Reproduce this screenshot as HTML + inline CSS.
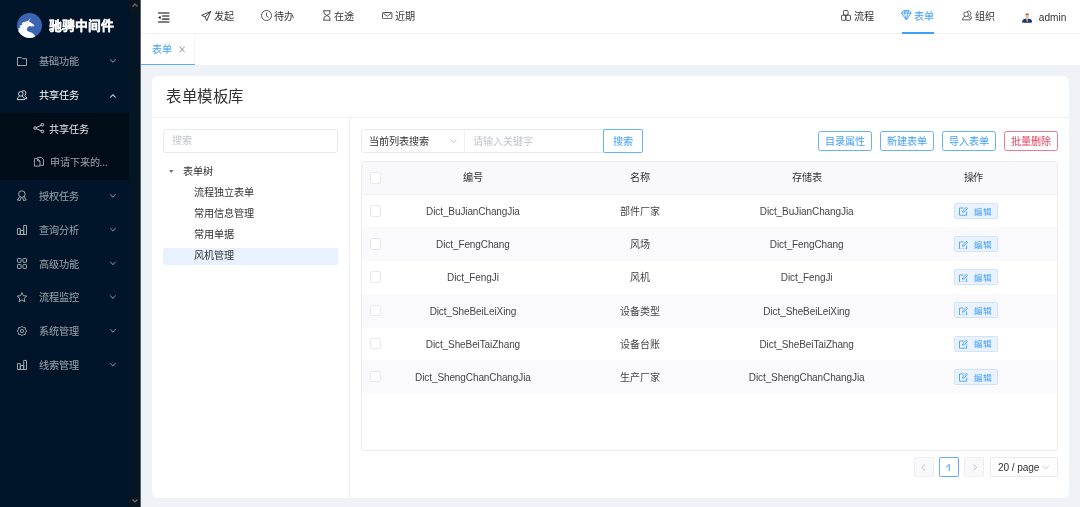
<!DOCTYPE html>
<html lang="zh-CN"><head><meta charset="utf-8"><style>
*{box-sizing:border-box;margin:0;padding:0}
html,body{width:1080px;height:507px;overflow:hidden;background:#eff3f7;font-family:"Liberation Sans",sans-serif;font-size:10.125px;color:#333}
#wrap{position:absolute;left:0;top:0;width:1080px;height:507px;will-change:transform;background:#eff3f7}
.abs{position:absolute}
#side{position:absolute;left:0;top:0;width:141px;height:507px;background:#001529}
.mi{position:absolute;left:0;width:129px;height:33.75px;color:rgba(255,255,255,.6);font-size:10.125px;line-height:33.75px;white-space:nowrap}
.mi .t{position:absolute;left:39px;top:0}
.mi svg.ic{position:absolute;left:17px;top:11.8px}
.mi .ch{position:absolute;left:110px;top:15px}
.sub{position:absolute;left:0;top:112.5px;width:129px;height:67.5px;background:#000c17}
.sub .mi .t{left:49px}
.sub .mi svg.ic{left:33.5px}
.nav{position:absolute;top:0;height:33px;line-height:33px;color:#333;font-size:10.125px;white-space:nowrap}
.btn{position:absolute;top:131px;height:20px;width:54px;border:1px solid #66b1ff;border-radius:2.5px;color:#409eff;text-align:center;line-height:19px;font-size:10.125px;background:#fff}
.row{position:absolute;left:361px;width:697px;height:33.13px;border-bottom:1px solid #f0f1f4}
.cell{position:absolute;top:1px;height:33px;line-height:33px;text-align:center;color:#454545;white-space:nowrap;font-size:10px;letter-spacing:-.1px}
.hd .cell{color:#333;font-size:10.125px;line-height:32px;top:0}
.cb{position:absolute;left:8.6px;top:10.5px;width:11.6px;height:11.6px;border:1px solid #e6e8eb;border-radius:2px;background:#fff}
.edit{position:absolute;left:593px;top:8.3px;width:44px;height:16px;background:#eaf3fd;border:1px solid #cfe4fb;border-radius:2px;color:#409eff;font-size:8.5px;line-height:14px}
.tree{position:absolute;color:#333;font-size:10.125px;white-space:nowrap;line-height:12px}
.pg{position:absolute;top:457px;height:20px;border:1px solid #eeeef0;border-radius:2px;background:#f9f9fb}
</style></head><body><div id="wrap">

<div id="side">
  <svg class="abs" style="left:17.2px;top:12.5px" width="25" height="25" viewBox="0 0 26 26">
    <defs><clipPath id="cc"><circle cx="13" cy="13" r="13"/></clipPath></defs>
    <circle cx="13" cy="13" r="13" fill="#3b64b3"/>
    <path clip-path="url(#cc)" d="M14.7 4.7L12.2 8.75C13.8 9.3 15.5 10.4 17.8 12.5L18.1 13.6 15.3 14.1 13.1 13.6C12 14 11.2 14.6 10.9 15.3 10.4 16.2 10 17 10.2 17.8 10.6 18.8 11.6 19.2 12.6 19.6 14.4 20.2 15.6 20.6 16.6 21.3 17.8 22.2 18.6 23.2 18.75 24.4L18.1 26 0 26 0 19 2.5 17.5 0.9 16.25 3.9 14.7 2.5 13.6 5.9 11.75 4.7 10.6C6.5 9.4 8 8.9 9.1 8.75L11.25 8.4Z" fill="#fff"/>
  </svg>
  <div class="abs" style="left:49.3px;top:17.5px;color:#fff;font-weight:bold;font-size:12.8px;line-height:15px;white-space:nowrap;-webkit-text-stroke:.3px #fff">驰骋中间件</div>
  <div class="sub"></div>
  <div class="mi" style="top:45.1px"><span class="t">基础功能</span></div>
  <div class="mi" style="top:78.85px;color:#fff"><span class="t">共享任务</span></div>
  <div class="mi" style="top:112.5px;color:#e6e7e9"><span class="t" style="left:49px">共享任务</span></div>
  <div class="mi" style="top:146.25px"><span class="t" style="left:49.5px">申请下来的...</span></div>
  <div class="mi" style="top:180px"><span class="t">授权任务</span></div>
  <div class="mi" style="top:213.75px"><span class="t">查询分析</span></div>
  <div class="mi" style="top:247.5px"><span class="t">高级功能</span></div>
  <div class="mi" style="top:281.25px"><span class="t">流程监控</span></div>
  <div class="mi" style="top:315px"><span class="t">系统管理</span></div>
  <div class="mi" style="top:348.75px"><span class="t">线索管理</span></div>
  <svg class="abs" style="left:0;top:0" width="141" height="507" viewBox="0 0 141 507" fill="none" stroke="#a6adb4" stroke-width=".95" stroke-linejoin="round">
    <path d="M17.45 57.45H21.2L22.4 58.7H26.5V65.5H17.45Z"/>
    <g stroke="#e2e4e7">
      <circle cx="20.8" cy="93.9" r="2.3"/>
      <path d="M17.2 99.6C17.4 97.6 18.5 96.6 19.6 96.2M22 96.2C23.2 96.6 24.3 97.6 24.6 99.6H17.2"/>
      <path d="M21.9 91.3A2.4 2.4 0 0 1 25.9 92.9C25.9 94 25.3 94.9 24.5 95.4M24.6 95.7C25.8 96.2 26.7 97.2 26.8 98.7H25.1"/>
    </g>
    <g stroke="#d6d8db">
      <circle cx="35.1" cy="128.1" r="1.3"/><circle cx="42.4" cy="124.7" r="1.3"/><circle cx="42.4" cy="131.5" r="1.3"/>
      <path d="M36.3 127.5L41.2 125.3M36.3 128.7L41.2 130.9"/>
    </g>
    <path d="M34.4 158.6H37.6L40 161V166.1H34.4ZM37.6 158.6V161H40M37.8 158.3V157.4H41.5L43.5 159.4V165.3H40.2"/>
    <circle cx="21.85" cy="194.1" r="3.3"/>
    <path d="M19.7 196.6L17.4 200.1 19 200 19.8 201 21.2 197.6M24 196.6L26.3 200.1 24.7 200 23.9 201 22.5 197.6"/>
    <path d="M17.45 234.5V228.6H20.3V234.5M20.3 234.5V230.5H23.7V234.5M23.7 234.5V225.45H26.5V234.5ZM17.45 234.5H26.5"/>
    <rect x="17.45" y="258.45" width="3.6" height="3.9" rx=".7"/><rect x="22.95" y="258.45" width="3.55" height="3.9" rx=".7"/>
    <rect x="17.45" y="264.5" width="3.6" height="4" rx=".7"/><rect x="22.95" y="264.5" width="3.55" height="4" rx=".7"/>
    <path d="M21.95 292.60 L23.33 295.70 L26.71 296.05 L24.18 298.33 L24.89 301.65 L21.95 299.95 L19.01 301.65 L19.72 298.33 L17.19 296.05 L20.57 295.70Z"/>
    <path d="M21.95 326.30 L23.39 327.59 L25.31 327.69 L25.41 329.61 L26.70 331.05 L25.41 332.49 L25.31 334.41 L23.39 334.51 L21.95 335.80 L20.51 334.51 L18.59 334.41 L18.49 332.49 L17.20 331.05 L18.49 329.61 L18.59 327.69 L20.51 327.59Z"/>
    <circle cx="21.95" cy="331.05" r="1.6"/>
    <path d="M17.45 369.5V363.6H20.3V369.5M20.3 369.5V365.5H23.7V369.5M23.7 369.5V360.45H26.5V369.5ZM17.45 369.5H26.5"/>
    <g stroke="#6f7882" stroke-width="1.05" stroke-linecap="round">
      <path d="M110.4 59.6L112.9 62.2 115.4 59.6"/>
      <path d="M110.4 97.3L112.9 94.7 115.4 97.3" stroke="#c9ccd0"/>
      <path d="M110.4 194.5L112.9 197.1 115.4 194.5"/>
      <path d="M110.4 228.25L112.9 230.85 115.4 228.25"/>
      <path d="M110.4 262L112.9 264.6 115.4 262"/>
      <path d="M110.4 295.75L112.9 298.35 115.4 295.75"/>
      <path d="M110.4 329.5L112.9 332.1 115.4 329.5"/>
      <path d="M110.4 363.25L112.9 365.85 115.4 363.25"/>
    </g>
  </svg>
</div>
<div class="abs" style="left:129px;top:0;width:11px;height:507px;background:#061524"></div>
<div class="abs" style="left:129px;top:0;width:11px;height:12px;background:#0a1520"></div>
<svg class="abs" style="left:131.5px;top:3px" width="6" height="4" viewBox="0 0 6 4"><path d="M0.5 3.5l2.5-2.5 2.5 2.5" fill="none" stroke="#6b7178" stroke-width="1.2"/></svg>
<div class="abs" style="left:129px;top:495px;width:11px;height:12px;background:#0a1520"></div>
<svg class="abs" style="left:131.5px;top:499px" width="6" height="4" viewBox="0 0 6 4"><path d="M0.5 0.5l2.5 2.5 2.5-2.5" fill="none" stroke="#6b7178" stroke-width="1.2"/></svg>
<div class="abs" style="left:140px;top:0;width:1px;height:507px;background:#5b6068"></div>

<div class="abs" style="left:141px;top:0;width:939px;height:34px;background:#fff;border-bottom:1px solid #f0f0f0"></div>
<svg class="abs" style="left:158px;top:12px" width="11.5" height="11" viewBox="0 0 11.5 11"><path d="M0 1.05h11.4M4.1 4h7.3M4.1 7.1h7.3M0 9.95h11.4" stroke="#5a5a5a" stroke-width="1.6"/><path d="M0.1 5.5l2.5-1.7v3.4z" fill="#222"/></svg>
<svg class="abs" style="left:201px;top:10.8px" width="10.2" height="10.2" viewBox="0 0 10.2 10.2"><path d="M9.7 0.5L0.6 4.3l3.4 1.7L5.8 9.7zM9.7 0.5L4 6" fill="none" stroke="#333" stroke-width=".9" stroke-linejoin="round"/></svg>
<div class="nav" style="left:213.5px">发起</div>
<svg class="abs" style="left:260.9px;top:10.1px" width="11" height="11" viewBox="0 0 11 11"><circle cx="5.5" cy="5.5" r="5" fill="none" stroke="#444" stroke-width=".9"/><path d="M5.5 2.7V6.2L7.4 7.4" fill="none" stroke="#444" stroke-width=".9"/></svg>
<div class="nav" style="left:273.8px">待办</div>
<svg class="abs" style="left:323px;top:10px" width="8" height="11" viewBox="0 0 8 11"><path d="M0.2 .75H7.6M0.2 10.2H7.6M1 .75V3.6L3.9 5.45 1 7.3V10.2M6.8 .75V3.6L3.9 5.45 6.8 7.3V10.2" fill="none" stroke="#444" stroke-width=".9"/></svg>
<div class="nav" style="left:334.2px">在途</div>
<svg class="abs" style="left:382px;top:12px" width="10.5" height="7.2" viewBox="0 0 10.5 7.2"><rect x=".5" y=".5" width="9.4" height="6.2" rx=".9" fill="none" stroke="#444" stroke-width=".95"/><path d="M1.3 1.2l3.95 3.1 3.95-3.1" fill="none" stroke="#444" stroke-width=".9"/></svg>
<div class="nav" style="left:394.7px">近期</div>

<svg class="abs" style="left:841px;top:10.2px" width="10.5" height="10.8" viewBox="0 0 10.5 10.8"><rect x="2.55" y=".45" width="4.5" height="4.7" rx=".9" fill="none" stroke="#3a3a3a" stroke-width=".9"/><rect x=".45" y="5.25" width="4.35" height="5.05" rx=".8" fill="none" stroke="#3a3a3a" stroke-width=".9"/><rect x="4.8" y="5.25" width="4.7" height="5.05" rx=".8" fill="none" stroke="#3a3a3a" stroke-width=".9"/></svg>
<div class="nav" style="left:853.5px">流程</div>
<svg class="abs" style="left:901.2px;top:10.3px" width="10.6" height="10.5" viewBox="0 0 10.6 10.5"><path d="M2.4 .55H8.2L10.1 3.2 5.3 9.9 .5 3.2Z" fill="none" stroke="#409eff" stroke-width=".95" stroke-linejoin="round"/><path d="M.5 3.2H10.1M3.2 .8L3.6 3.2 5.3 9.6 7 3.2 7.4 .8M3.6 3.2L5.3 1.2 7 3.2" fill="none" stroke="#409eff" stroke-width=".8" stroke-linejoin="round"/></svg>
<div class="nav" style="left:914px;color:#409eff">表单</div>
<div class="abs" style="left:901.8px;top:32px;width:32px;height:2px;background:#409eff"></div>
<svg class="abs" style="left:961.7px;top:10.2px" width="10.5" height="10.8" viewBox="0 0 11 11"><path d="M5.3 1.6A2.4 2.4 0 0 1 9.3 3.4c0 1-.5 1.8-1.2 2.3M8.1 5.7c.9.4 2 1.2 2.2 2.7H8.8" fill="none" stroke="#444" stroke-width=".9"/><circle cx="4.4" cy="4.3" r="2.4" fill="none" stroke="#444" stroke-width=".9"/><path d="M3.2 6.5C1.8 7 .5 8 .5 10.2h8.3C8.8 8 7.3 7 5.7 6.5" fill="none" stroke="#444" stroke-width=".9"/></svg>
<div class="nav" style="left:974.5px">组织</div>
<svg class="abs" style="left:1022px;top:12.8px" width="10.3" height="9.8" viewBox="0 0 10.3 9.8"><path d="M0 9.5c0-2.4 1.6-3.9 5.15-3.9S10.3 7.1 10.3 9.5c-1.5.4-3.2.4-5.15.4S1.5 9.9 0 9.5z" fill="#163a78"/><path d="M4.3 5.6h1.7L5.15 9.5z" fill="#fff"/><path d="M4.85 5.9h.6l.3 3.3-.6.6-.6-.6z" fill="#e58a20"/><ellipse cx="5.15" cy="2.9" rx="1.7" ry="2.1" fill="#e9b895"/><path d="M3.4 2.6C3.3 1.1 4.1.5 5.2.5s1.9.6 1.8 2.1c-.3-.8-.8-1-1.8-1s-1.5.2-1.8 1z" fill="#4a4a4a"/></svg>
<div class="nav" style="left:1038.8px;top:.5px">admin</div>

<div class="abs" style="left:141px;top:34px;width:939px;height:31px;background:#fff"></div>
<div class="abs" style="left:141px;top:34px;width:54px;height:30px;background:#fff;border-right:1px solid #f6f6f6"></div>
<div class="abs" style="left:152px;top:41.5px;color:#409eff;font-size:10.125px;line-height:15px">表单</div>
<svg class="abs" style="left:178.9px;top:45.8px" width="6.3" height="7" viewBox="0 0 6.3 7"><path d="M0.5 0.5l5.3 5.9M5.8 0.5L0.5 6.4" stroke="#8a8a8a" stroke-width=".95"/></svg>
<div class="abs" style="left:141px;top:64px;width:54px;height:1px;background:#5eabf8"></div>

<div class="abs" style="left:152px;top:76px;width:917px;height:422.4px;background:#fff;border-radius:6px"></div>
<div class="abs" style="left:166px;top:86.5px;font-size:15.4px;letter-spacing:.6px;line-height:20px;color:#303133">表单模板库</div>
<div class="abs" style="left:152px;top:117px;width:917px;height:1px;background:#efefef"></div>
<div class="abs" style="left:349px;top:118px;width:1px;height:380px;background:#efefef"></div>

<div class="abs" style="left:163px;top:129px;width:175px;height:24px;border:1px solid #e8e9ed;border-radius:3px"></div>
<div class="tree" style="left:171.6px;top:134.5px;color:#c0c4cc">搜索</div>
<svg class="abs" style="left:169.3px;top:169.7px" width="4.6" height="3" viewBox="0 0 4.6 3"><path d="M0 0h4.6L2.3 3z" fill="#777"/></svg>
<div class="tree" style="left:182.8px;top:165.6px">表单树</div>
<div class="tree" style="left:194.2px;top:187.1px">流程独立表单</div>
<div class="tree" style="left:194.2px;top:208px">常用信息管理</div>
<div class="tree" style="left:194.2px;top:228.9px">常用单据</div>
<div class="abs" style="left:163px;top:248px;width:175px;height:17px;background:#e8f2fe;border-radius:2px"></div>
<div class="tree" style="left:194.2px;top:249.7px">风机管理</div>

<div class="abs" style="left:361px;top:129px;width:243px;height:24px;border:1px solid #e8e9ed;border-radius:3px 0 0 3px"></div>
<div class="abs" style="left:464px;top:129px;width:1px;height:24px;background:#efeff3"></div>
<div class="tree" style="left:369.4px;top:135.7px;color:#333">当前列表搜索</div>
<svg class="abs" style="left:450px;top:139.4px" width="6.7" height="4.2" viewBox="0 0 6.7 4.2"><path d="M0.4 0.4l2.95 3.4 2.95-3.4" fill="none" stroke="#c4c6cc" stroke-width="1"/></svg>
<div class="tree" style="left:473.3px;top:135.7px;color:#c0c4cc">请输入关键字</div>
<div class="abs" style="left:603px;top:129px;width:40px;height:24px;border:1px solid #66b1ff;border-radius:2px;color:#409eff;text-align:center;line-height:23.2px;background:#fff">搜索</div>

<div class="btn" style="left:818px">目录属性</div>
<div class="btn" style="left:880px">新建表单</div>
<div class="btn" style="left:942px">导入表单</div>
<div class="btn" style="left:1004px;border-color:#e87d92;color:#e0435e">批量删除</div>

<div class="abs" style="left:361px;top:161px;width:697px;height:290px;border:1px solid #ececec;border-radius:3px"></div>
<div class="abs" style="left:362px;top:162px;width:695px;height:33px;background:#f9f9fb;border-radius:2px 2px 0 0;border-bottom:1px solid #efeff2"></div>
<div class="abs" style="left:362px;top:226.6px;width:695px;height:34.90px;background:#fafafc"></div>
<div class="abs" style="left:362px;top:293.6px;width:695px;height:34.00px;background:#fafafc"></div>
<div class="abs" style="left:362px;top:359.7px;width:695px;height:33.60px;background:#fafafc"></div>
<div class="row hd" style="top:161.5px;height:33.2px;border:none"><div class="cb"></div><div class="cell" style="left:28.50px;width:166.86px">编号</div><div class="cell" style="left:195.36px;width:166.86px">名称</div><div class="cell" style="left:362.22px;width:166.86px">存储表</div><div class="cell" style="left:529.08px;width:166.86px">操作</div></div>
<div class="row" style="top:194.20px;border:none"><div class="cb" style="top:11px"></div><div class="cell" style="left:28.50px;width:166.86px">Dict_BuJianChangJia</div><div class="cell" style="left:195.36px;width:166.86px">部件厂家</div><div class="cell" style="left:362.22px;width:166.86px">Dict_BuJianChangJia</div><div class="edit" style="top:8.8px"><svg style="position:absolute;left:4.2px;top:3.4px" width="9.5" height="8.7" viewBox="0 0 9.5 8.7"><path d="M4.5 1H0.5v7.2h7.2V4.5M3.5 5.2l.3-1.5L7.3.3l1.2 1.2L5 5z" fill="none" stroke="#409eff" stroke-width=".9" stroke-linejoin="round"/></svg><span style="position:absolute;left:18.8px;top:0.9px;font-size:8.5px">编辑</span></div></div>
<div class="row" style="top:227.33px;border:none"><div class="cb" style="top:11px"></div><div class="cell" style="left:28.50px;width:166.86px">Dict_FengChang</div><div class="cell" style="left:195.36px;width:166.86px">风场</div><div class="cell" style="left:362.22px;width:166.86px">Dict_FengChang</div><div class="edit" style="top:8.8px"><svg style="position:absolute;left:4.2px;top:3.4px" width="9.5" height="8.7" viewBox="0 0 9.5 8.7"><path d="M4.5 1H0.5v7.2h7.2V4.5M3.5 5.2l.3-1.5L7.3.3l1.2 1.2L5 5z" fill="none" stroke="#409eff" stroke-width=".9" stroke-linejoin="round"/></svg><span style="position:absolute;left:18.8px;top:0.9px;font-size:8.5px">编辑</span></div></div>
<div class="row" style="top:260.46px;border:none"><div class="cb" style="top:11px"></div><div class="cell" style="left:28.50px;width:166.86px">Dict_FengJi</div><div class="cell" style="left:195.36px;width:166.86px">风机</div><div class="cell" style="left:362.22px;width:166.86px">Dict_FengJi</div><div class="edit" style="top:8.8px"><svg style="position:absolute;left:4.2px;top:3.4px" width="9.5" height="8.7" viewBox="0 0 9.5 8.7"><path d="M4.5 1H0.5v7.2h7.2V4.5M3.5 5.2l.3-1.5L7.3.3l1.2 1.2L5 5z" fill="none" stroke="#409eff" stroke-width=".9" stroke-linejoin="round"/></svg><span style="position:absolute;left:18.8px;top:0.9px;font-size:8.5px">编辑</span></div></div>
<div class="row" style="top:293.59px;border:none"><div class="cb" style="top:11px"></div><div class="cell" style="left:28.50px;width:166.86px">Dict_SheBeiLeiXing</div><div class="cell" style="left:195.36px;width:166.86px">设备类型</div><div class="cell" style="left:362.22px;width:166.86px">Dict_SheBeiLeiXing</div><div class="edit" style="top:8.8px"><svg style="position:absolute;left:4.2px;top:3.4px" width="9.5" height="8.7" viewBox="0 0 9.5 8.7"><path d="M4.5 1H0.5v7.2h7.2V4.5M3.5 5.2l.3-1.5L7.3.3l1.2 1.2L5 5z" fill="none" stroke="#409eff" stroke-width=".9" stroke-linejoin="round"/></svg><span style="position:absolute;left:18.8px;top:0.9px;font-size:8.5px">编辑</span></div></div>
<div class="row" style="top:326.72px;border:none"><div class="cb" style="top:11px"></div><div class="cell" style="left:28.50px;width:166.86px">Dict_SheBeiTaiZhang</div><div class="cell" style="left:195.36px;width:166.86px">设备台账</div><div class="cell" style="left:362.22px;width:166.86px">Dict_SheBeiTaiZhang</div><div class="edit" style="top:8.8px"><svg style="position:absolute;left:4.2px;top:3.4px" width="9.5" height="8.7" viewBox="0 0 9.5 8.7"><path d="M4.5 1H0.5v7.2h7.2V4.5M3.5 5.2l.3-1.5L7.3.3l1.2 1.2L5 5z" fill="none" stroke="#409eff" stroke-width=".9" stroke-linejoin="round"/></svg><span style="position:absolute;left:18.8px;top:0.9px;font-size:8.5px">编辑</span></div></div>
<div class="row" style="top:359.85px;border:none"><div class="cb" style="top:11px"></div><div class="cell" style="left:28.50px;width:166.86px">Dict_ShengChanChangJia</div><div class="cell" style="left:195.36px;width:166.86px">生产厂家</div><div class="cell" style="left:362.22px;width:166.86px">Dict_ShengChanChangJia</div><div class="edit" style="top:8.8px"><svg style="position:absolute;left:4.2px;top:3.4px" width="9.5" height="8.7" viewBox="0 0 9.5 8.7"><path d="M4.5 1H0.5v7.2h7.2V4.5M3.5 5.2l.3-1.5L7.3.3l1.2 1.2L5 5z" fill="none" stroke="#409eff" stroke-width=".9" stroke-linejoin="round"/></svg><span style="position:absolute;left:18.8px;top:0.9px;font-size:8.5px">编辑</span></div></div>

<div class="pg" style="left:914px;width:20px"></div>
<svg class="abs" style="left:920.8px;top:463.8px" width="4.5" height="7" viewBox="0 0 4.5 7"><path d="M4 0.4L0.8 3.5 4 6.6" fill="none" stroke="#a8abb2" stroke-width=".8"/></svg>
<div class="pg" style="left:939px;width:20px;background:#fff;border-color:#62acf8"></div><svg class="abs" style="left:946px;top:463.8px" width="4.5" height="7.5" viewBox="0 0 4.5 7.5"><path d="M3.2 0.2V7.3M3.2 .4C2.6 1.6 1.6 2.3 .4 2.7" fill="none" stroke="#409eff" stroke-width="1"/></svg>
<div class="pg" style="left:964px;width:20px"></div>
<svg class="abs" style="left:972.5px;top:463.5px" width="4.5" height="7" viewBox="0 0 4.5 7"><path d="M0.5 0.4L3.7 3.5 0.5 6.6" fill="none" stroke="#a8abb2" stroke-width=".8"/></svg>
<div class="pg" style="left:990px;width:68px;background:#fff;border-color:#e9eaee"></div>
<div class="abs" style="left:998px;top:462.4px;line-height:12px;color:#333;letter-spacing:-.1px">20 / page</div>
<svg class="abs" style="left:1041.8px;top:465.3px" width="7.4" height="4.4" viewBox="0 0 7.4 4.4"><path d="M0.4 0.4l3.3 3.6 3.3-3.6" fill="none" stroke="#c4c6cc" stroke-width=".9"/></svg>

</div></body></html>
